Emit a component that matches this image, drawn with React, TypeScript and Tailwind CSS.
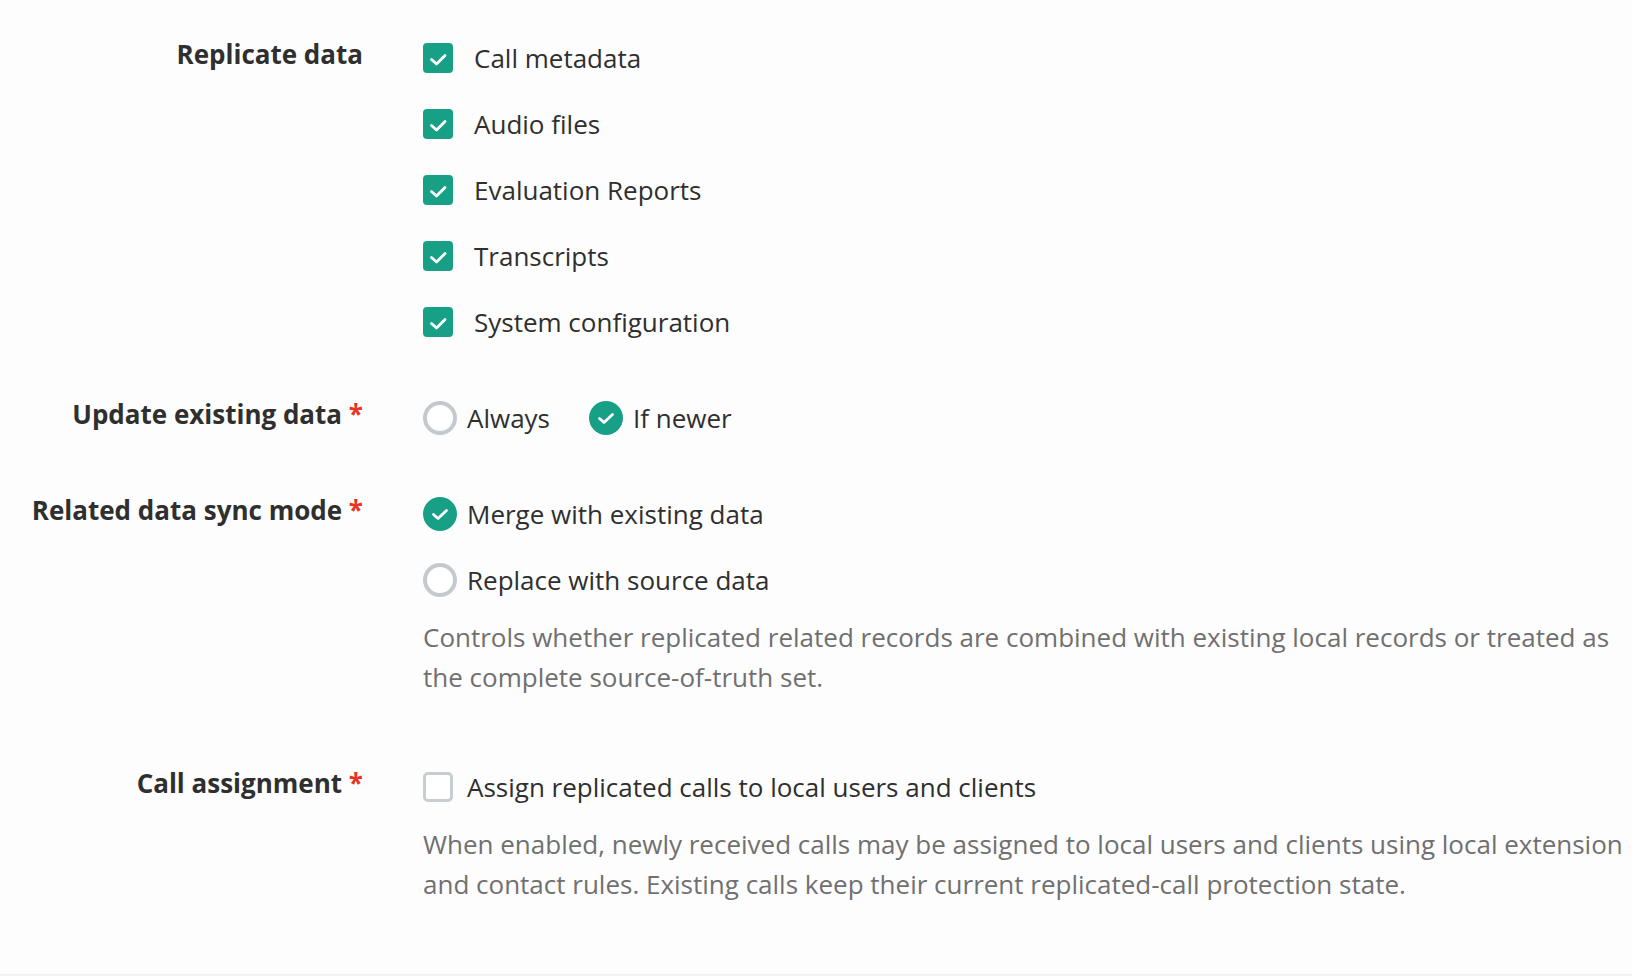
import React from "react";

const GREEN = "bg-[#17a085]";

function CheckedBox() {
  return (
    <span className={`flex h-[30px] w-[30px] shrink-0 items-center justify-center rounded-[4px] ${GREEN}`}>
      <svg width="30" height="30" viewBox="0 0 30 30" fill="none">
        <polyline points="8.5,16.5 13.5,21 22,12.5" stroke="#ffffff" strokeWidth="2.8" strokeLinecap="round" strokeLinejoin="round" />
      </svg>
    </span>
  );
}

function EmptyBox() {
  return <span className="block h-[30px] w-[30px] shrink-0 rounded-[5px] border-[3px] border-[#c8cdd2] bg-white" />;
}

function RadioOn() {
  return (
    <span className={`flex h-[34px] w-[34px] shrink-0 items-center justify-center rounded-full ${GREEN}`}>
      <svg width="34" height="34" viewBox="0 0 34 34" fill="none">
        <polyline points="10.5,17.5 15,21.5 23.5,13.5" stroke="#ffffff" strokeWidth="2.8" strokeLinecap="round" strokeLinejoin="round" />
      </svg>
    </span>
  );
}

function RadioOff() {
  return <span className="block h-[34px] w-[34px] shrink-0 rounded-full border-[4px] border-[#c4c9ce] bg-white" />;
}

function CheckOption({ label, checked = true }: { label: string; checked?: boolean }) {
  return (
    <div className="flex h-[40px] items-center">
      {checked ? <CheckedBox /> : <EmptyBox />}
      <span className={checked ? "ml-[21px]" : "ml-[14px]"}>{label}</span>
    </div>
  );
}

function RadioOption({ label, on }: { label: string; on: boolean }) {
  return (
    <div className="flex h-[40px] items-center">
      {on ? <RadioOn /> : <RadioOff />}
      <span className="ml-[10px]">{label}</span>
    </div>
  );
}

function Row({ label, required, children }: { label: string; required?: boolean; children: React.ReactNode }) {
  return (
    <div className="flex">
      <div className="w-[363px] shrink-0 text-right text-[26px] font-bold leading-[40px] text-[#2f2f2f]">
        {label}
        {required && <span className="text-[#ea3323]"> *</span>}
      </div>
      <div className="ml-[60px] min-w-0 flex-1 pt-[4px]">{children}</div>
    </div>
  );
}

function Desc({ children, last }: { children: React.ReactNode; last?: boolean }) {
  return (
    <p className={`mt-[17px] text-[26px] leading-[40px] text-[#707070] ${last ? "" : "mb-[14px]"}`}>{children}</p>
  );
}

export default function App() {
  return (
    <div className="min-h-screen w-full bg-[#fdfdfd] font-['Open_Sans',sans-serif] text-[26px] text-[#2f2f2f]">
      <div className="flex flex-col gap-[52px] border-b-2 border-[#f2f2f2] pb-[70px] pt-[34px]">
        <Row label="Replicate data">
          <div className="flex flex-col gap-[26px] leading-[40px]">
            <CheckOption label="Call metadata" />
            <CheckOption label="Audio files" />
            <CheckOption label="Evaluation Reports" />
            <CheckOption label="Transcripts" />
            <CheckOption label="System configuration" />
          </div>
        </Row>

        <Row label="Update existing data" required>
          <div className="flex gap-[39px] leading-[40px]">
            <RadioOption label="Always" on={false} />
            <RadioOption label="If newer" on />
          </div>
        </Row>

        <Row label="Related data sync mode" required>
          <div className="flex flex-col gap-[26px] leading-[40px]">
            <RadioOption label="Merge with existing data" on />
            <RadioOption label="Replace with source data" on={false} />
          </div>
          <Desc>
            Controls whether replicated related records are combined with existing local records or treated as the
            complete source-of-truth set.
          </Desc>
        </Row>

        <Row label="Call assignment" required>
          <div className="leading-[40px]">
            <CheckOption label="Assign replicated calls to local users and clients" checked={false} />
          </div>
          <Desc last>
            When enabled, newly received calls may be assigned to local users and clients using local extension and
            contact rules. Existing calls keep their current replicated-call protection state.
          </Desc>
        </Row>
      </div>
    </div>
  );
}
